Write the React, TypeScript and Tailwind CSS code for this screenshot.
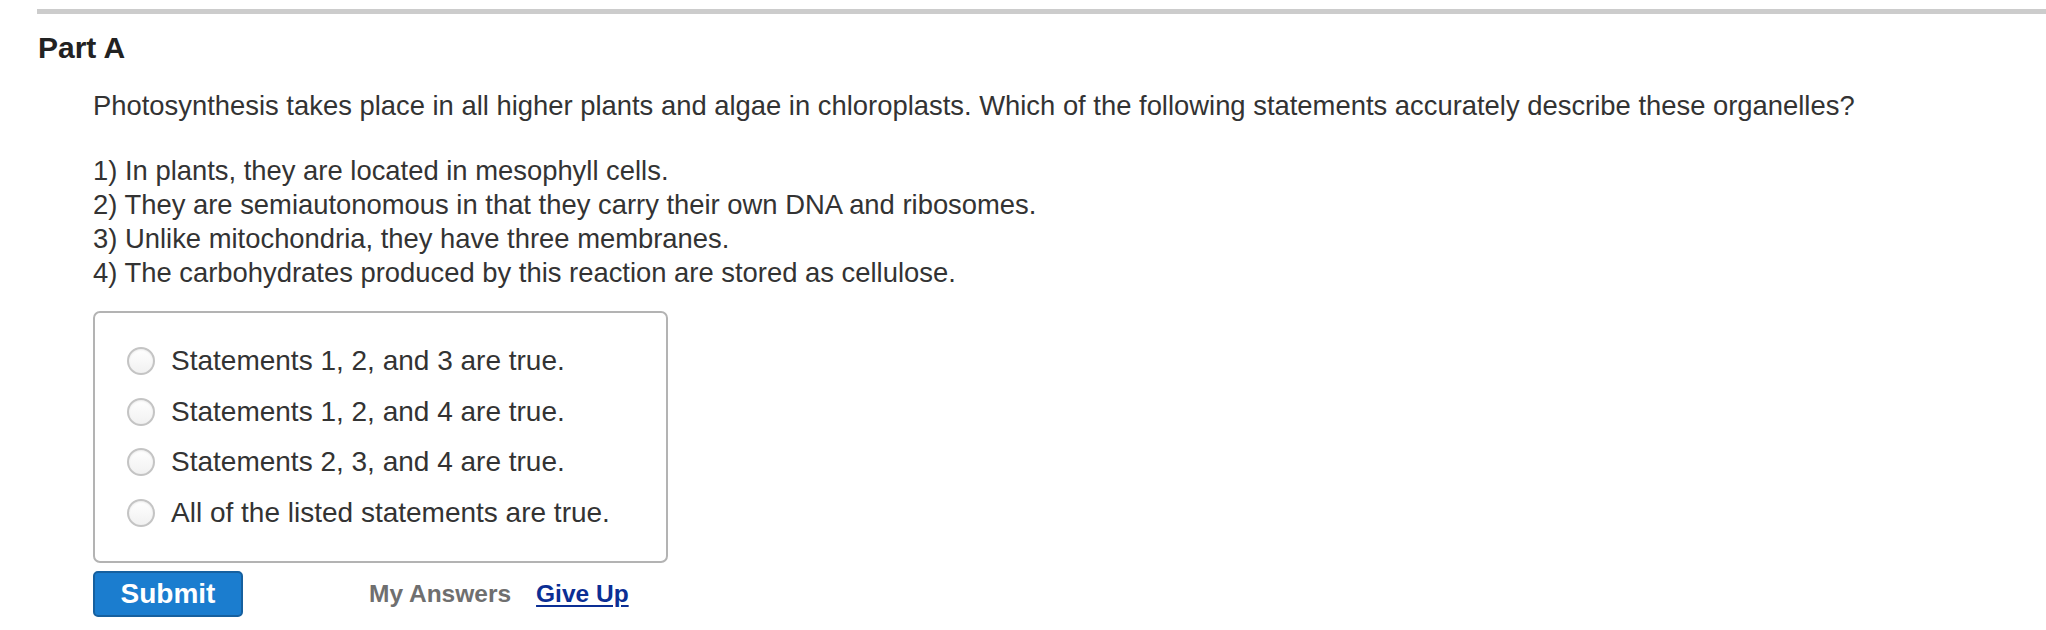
import { useState } from "react";

const options = [
  "Statements 1, 2, and 3 are true.",
  "Statements 1, 2, and 4 are true.",
  "Statements 2, 3, and 4 are true.",
  "All of the listed statements are true.",
];

const statements = [
  "1) In plants, they are located in mesophyll cells.",
  "2) They are semiautonomous in that they carry their own DNA and ribosomes.",
  "3) Unlike mitochondria, they have three membranes.",
  "4) The carbohydrates produced by this reaction are stored as cellulose.",
];

export default function App() {
  const [picked, setPicked] = useState<number | null>(null);

  return (
    <div className="min-h-[630px] w-full bg-white pt-[9px] font-['Liberation_Sans',Arial,sans-serif] text-[#333]">
      {/* top rule */}
      <div className="ml-[37px] h-[5px] bg-[#cccccc]" />

      <div className="pl-[38px]">
        {/* Part heading */}
        <h2 className="mt-[17px] text-[30px] leading-[34px] font-bold text-[#222]">Part A</h2>

        <div className="pl-[55px]">
          {/* Question */}
          <p className="mt-[24px] text-[27.4px] leading-[34px]">
            Photosynthesis takes place in all higher plants and algae in chloroplasts. Which of the following
            statements accurately describe these organelles?
          </p>

          <div className="mt-[31px] text-[27.4px] leading-[34px]">
            {statements.map((s) => (
              <p key={s}>{s}</p>
            ))}
          </div>

          {/* Choices */}
          <div className="mt-[21px] w-[575px] rounded-[7px] border-2 border-[#b3b3b3] pt-[23px] pb-[23px] pl-[32px]">
            {options.map((o, i) => (
              <label
                key={o}
                className="flex h-[50.5px] cursor-pointer items-center gap-[16px] text-[28px]"
                onClick={() => setPicked(i)}
              >
                <span className="flex h-[28px] w-[28px] items-center justify-center rounded-full border-2 border-[#c4c4c4] bg-gradient-to-b from-[#ffffff] to-[#f1f1f1] shadow-[inset_0_1px_2px_rgba(0,0,0,0.08)]">
                  {picked === i && <span className="h-[12px] w-[12px] rounded-full bg-[#333]" />}
                </span>
                <span>{o}</span>
              </label>
            ))}
          </div>

          {/* Actions */}
          <div className="mt-[8px] flex items-center">
            <button className="h-[46px] w-[150px] rounded-[5px] border-2 border-[#16609f] bg-[#1b7dcf] text-[28px] leading-none font-bold text-white">
              Submit
            </button>
            <span className="ml-[126px] text-[24.5px] font-bold text-[#6f6f6f]">My Answers</span>
            <a href="#" className="ml-[25px] text-[24.5px] font-bold text-[#0b2e94] underline underline-offset-[3px]">
              Give Up
            </a>
          </div>
        </div>
      </div>
    </div>
  );
}
